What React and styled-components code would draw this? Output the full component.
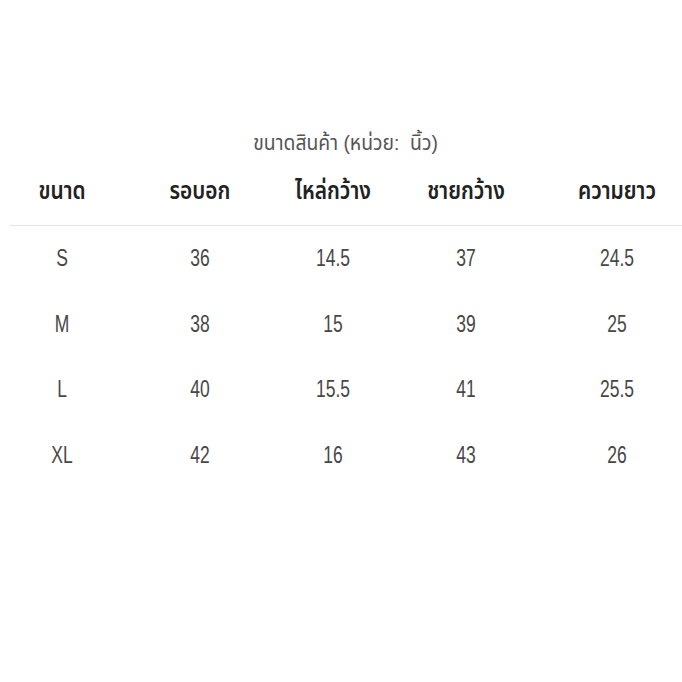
import React from 'react';
import styled, { createGlobalStyle } from 'styled-components';

const GlobalStyle = createGlobalStyle`
  html, body {
    margin: 0;
    padding: 0;
    background: #ffffff;
  }
  body {
    font-family: 'Liberation Sans', 'Noto Sans Thai', 'Noto Sans', sans-serif;
  }
`;

const columns = ['ขนาด', 'รอบอก', 'ไหล่กว้าง', 'ชายกว้าง', 'ความยาว'];

const rows = [
  ['S', '36', '14.5', '37', '24.5'],
  ['M', '38', '15', '39', '25'],
  ['L', '40', '15.5', '41', '25.5'],
  ['XL', '42', '16', '43', '26'],
];

export default function App() {
  return (
    <>
      <GlobalStyle />
      <Page>
        <Caption>ขนาดสินค้า (หน่วย:&nbsp; นิ้ว)</Caption>
        <HeadRow>
          {columns.map((c, i) => (
            <HeadCell key={i}>{c}</HeadCell>
          ))}
        </HeadRow>
        {rows.map((row, r) => (
          <DataRow key={r}>
            {row.map((v, i) => (
              <DataCell key={i}>{v}</DataCell>
            ))}
          </DataRow>
        ))}
      </Page>
    </>
  );
}

const Page = styled.div`
  width: 682px;
  height: 682px;
  padding-top: 127px;
  box-sizing: border-box;
  overflow: hidden;
`;

/* the reference uses a narrow face; the regular one is squeezed a little */
const Caption = styled.div`
  text-align: center;
  padding-left: 10px;
  font-size: 21px;
  line-height: 32px;
  color: #555555;
  transform: scaleX(0.92);
`;

const gridCols = `
  display: grid;
  grid-template-columns: 104px 172px 94px 172px 130px;
  margin-left: 10px;
  width: 672px;
`;

const HeadRow = styled.div`
  ${gridCols}
  height: 66px;
  align-items: center;
  border-bottom: 1px solid #e6e6e6;
`;

const HeadCell = styled.div`
  text-align: center;
  font-size: 24px;
  font-weight: 600;
  color: #222222;
  white-space: nowrap;
  transform: scaleX(0.87);
`;

const DataRow = styled.div`
  ${gridCols}
  height: 65.5px;
  align-items: center;
`;

const DataCell = styled.div`
  text-align: center;
  font-size: 23px;
  color: #474747;
  transform: scaleX(0.76);
`;
